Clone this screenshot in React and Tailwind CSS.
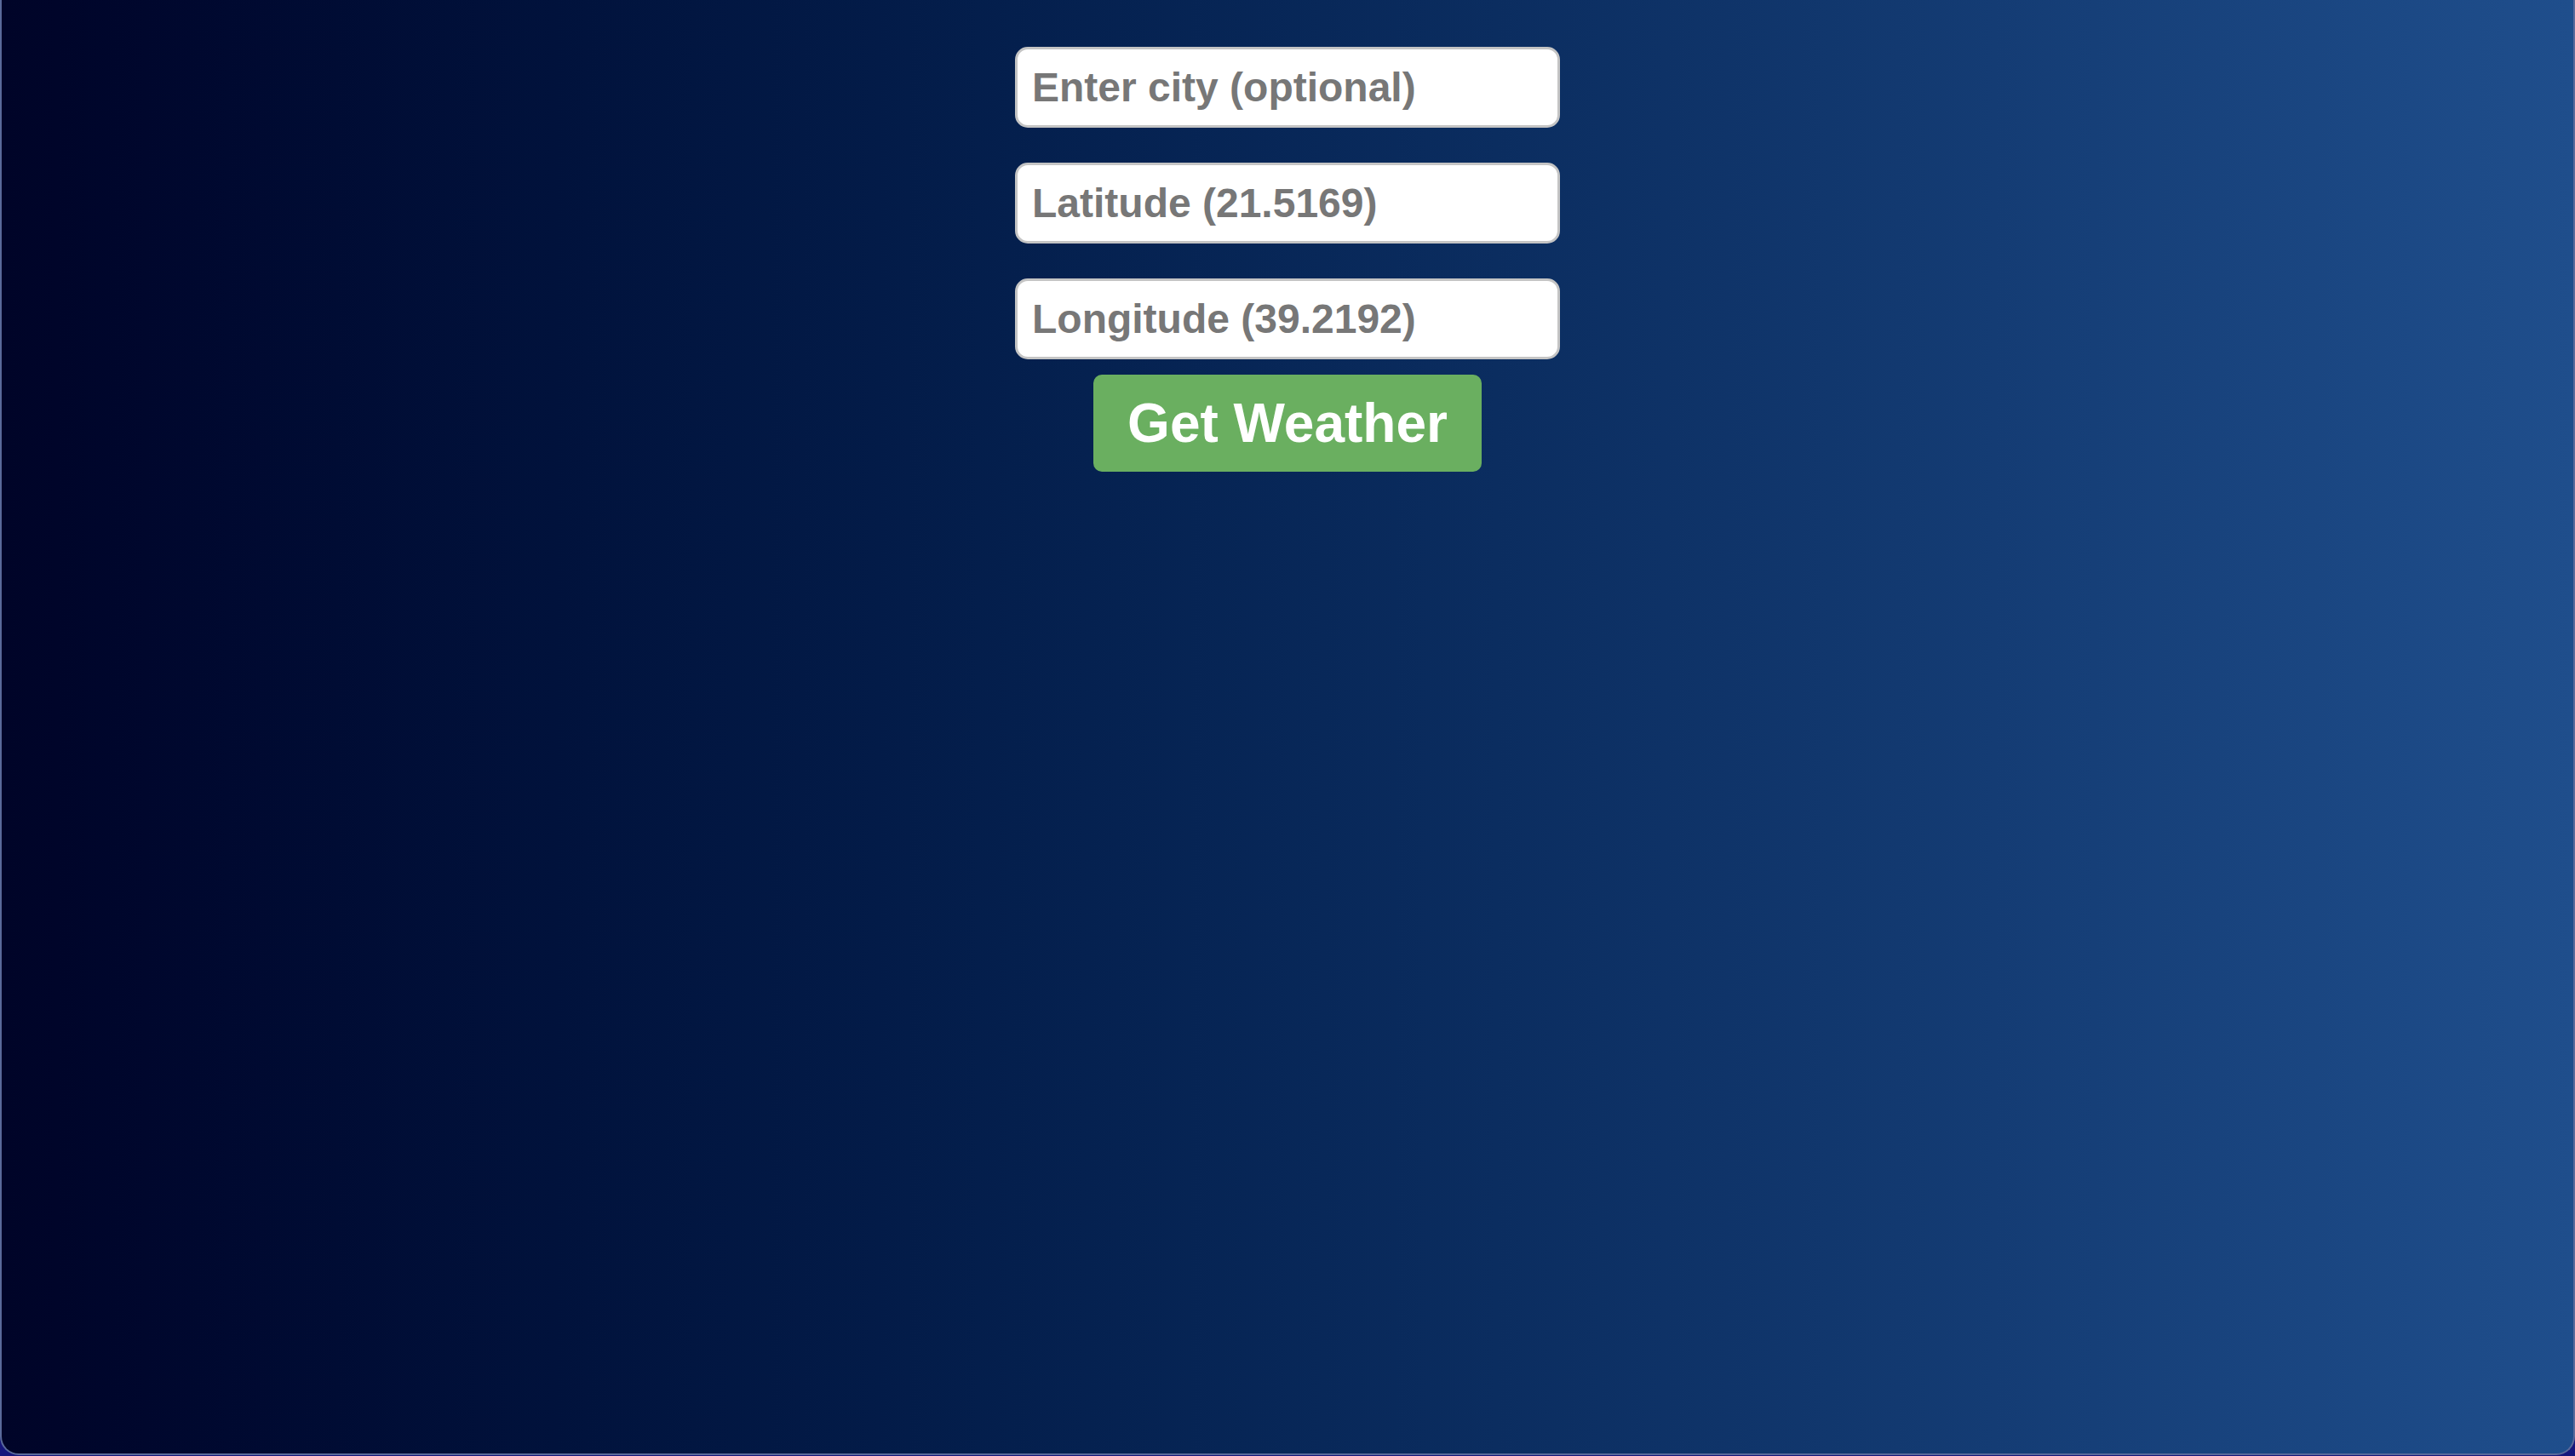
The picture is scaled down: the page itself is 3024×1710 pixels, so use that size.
export default function App() {
  const inputCls =
    "box-border w-[640px] h-[95px] bg-white border-[3px] border-[#c4c4c4] rounded-[15px] px-[17px] text-[48px] font-bold text-[#333] placeholder:text-[#777] outline-none";
  return (
    <div className="w-full h-[1710px] bg-[#16167c] overflow-hidden" style={{ fontFamily: '"Liberation Sans", Arial, sans-serif' }}>
      <div className="box-border w-full h-[1709px] rounded-b-[22px] border-x-2 border-b-2 border-[#5a6a9a] bg-gradient-to-r from-[#000428] to-[#1f4e8c] flex flex-col items-center pt-[55px]">
        <input className={inputCls} placeholder="Enter city (optional)" />
        <input className={inputCls + " mt-[41px]"} placeholder="Latitude (21.5169)" />
        <input className={inputCls + " mt-[41px]"} placeholder="Longitude (39.2192)" />
        <button className="mt-[18px] w-[456px] h-[114px] bg-[#6aaf60] rounded-[10px] text-white text-[64px] font-bold leading-none">
          Get Weather
        </button>
      </div>
    </div>
  );
}
